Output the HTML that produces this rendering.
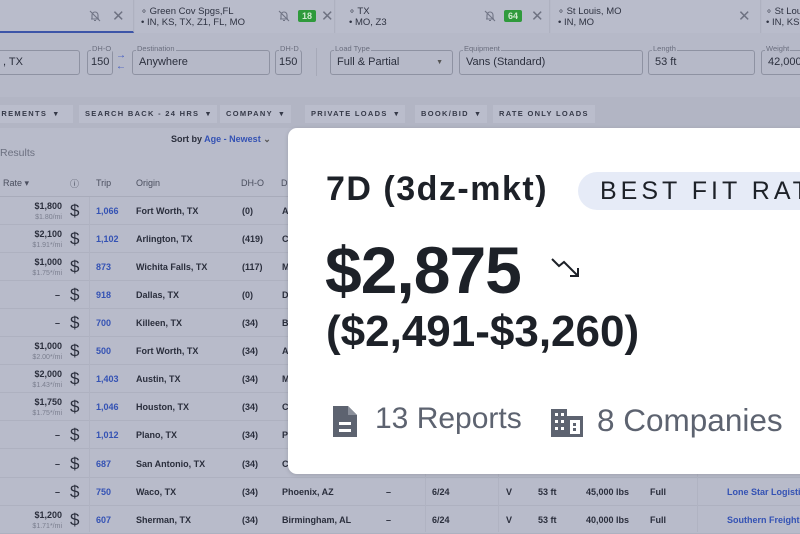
<!DOCTYPE html>
<html><head><meta charset="utf-8"><style>
*{box-sizing:border-box;margin:0;padding:0}
body{width:800px;height:532px;overflow:hidden;background:#b8bbca;font-family:"Liberation Sans",sans-serif;color:#2a2e3c;position:relative}
.a{position:absolute;white-space:nowrap}
.tabs{position:absolute;left:0;top:0;width:800px;height:33px;background:#b6b9c8}
.tab{position:absolute;top:0;height:33px;background:#b9bccb;border-right:1px solid #aeb1c0}
.tl{font-size:9.5px;line-height:11px;color:#2f3342}
.x{font-size:15px;color:#6e7282}
.badge{background:#2f9a3c;color:#cfe9cf;font-size:9px;font-weight:bold;padding:1px 4px;border-radius:2px}
.form{position:absolute;left:0;top:33px;width:800px;height:64px;background:#b6b9c8}
.fld{position:absolute;top:50px;height:25px;border:1px solid #8e92a2;border-radius:3px;font-size:11px;line-height:23px;padding-left:6px;color:#2b2f3d;white-space:nowrap}
.lab{position:absolute;top:-7px;left:3px;font-size:7.5px;line-height:10px;background:#b6b9c8;color:#6a6e7e;padding:0 1px;white-space:nowrap}
.chips{position:absolute;left:0;top:97px;width:800px;height:31px;background:#b2b5c4}
.chip{position:absolute;top:105px;height:18px;background:#babdcc;font-size:7.5px;font-weight:bold;letter-spacing:1.3px;line-height:18px;padding:0 6px;color:#353948;white-space:nowrap}
.row{position:absolute;left:0;width:800px;height:28px;border-bottom:1px solid #aeb1c0;font-size:9px;font-weight:bold}
.row span{position:absolute;top:9px;white-space:nowrap}
.b{color:#3452b4}
.card{position:absolute;left:288px;top:128px;width:530px;height:346px;background:#fff;border-radius:9px;box-shadow:0 1px 4px rgba(0,0,0,.15)}
</style></head><body>
<div class="tabs"></div>
<div class="tab" style="left:0;width:134px;border-bottom:2px solid #3d55a8"></div>
<div class="a x" style="left:112px;top:7px">✕</div>
<svg class="a" style="left:89px;top:10px" width="12" height="12" viewBox="0 0 12 12"><path d="M3 9 V5 a3 3 0 0 1 6 0 V9 H2 H10 M5 10.5 H7 M1 1 L11 11" fill="none" stroke="#707485" stroke-width="1.1"/></svg>
<div class="tab" style="left:135px;width:200px"></div>
<div class="a tl" style="left:141px;top:6px">∘ Green Cov Spgs,FL<br>• IN, KS, TX, Z1, FL, MO</div>
<svg class="a" style="left:278px;top:10px" width="12" height="12" viewBox="0 0 12 12"><path d="M3 9 V5 a3 3 0 0 1 6 0 V9 H2 H10 M5 10.5 H7 M1 1 L11 11" fill="none" stroke="#707485" stroke-width="1.1"/></svg>
<div class="a badge" style="left:298px;top:10px">18</div>
<div class="a x" style="left:321px;top:7px">✕</div>
<div class="tab" style="left:336px;width:214px"></div>
<div class="a tl" style="left:349px;top:6px">∘ TX<br>• MO, Z3</div>
<svg class="a" style="left:484px;top:10px" width="12" height="12" viewBox="0 0 12 12"><path d="M3 9 V5 a3 3 0 0 1 6 0 V9 H2 H10 M5 10.5 H7 M1 1 L11 11" fill="none" stroke="#707485" stroke-width="1.1"/></svg>
<div class="a badge" style="left:504px;top:10px">64</div>
<div class="a x" style="left:531px;top:7px">✕</div>
<div class="tab" style="left:551px;width:210px"></div>
<div class="a tl" style="left:558px;top:6px">∘ St Louis, MO<br>• IN, MO</div>
<div class="a x" style="left:738px;top:7px">✕</div>
<div class="tab" style="left:762px;width:40px"></div>
<div class="a tl" style="left:766px;top:6px">∘ St Lou<br>• IN, KS.</div>

<div class="form"></div>
<div class="fld" style="left:-4px;width:84px">, TX</div>
<div class="fld" style="left:87px;width:26px;padding-left:3px"><span class="lab">DH-O</span>150</div>
<div class="a" style="left:116px;top:50px;font-size:10px;color:#3a55c0;line-height:11px;font-weight:bold">→<br>←</div>
<div class="fld" style="left:132px;width:138px"><span class="lab">Destination</span>Anywhere</div>
<div class="fld" style="left:275px;width:27px;padding-left:3px"><span class="lab">DH-D</span>150</div>
<div class="a" style="left:316px;top:48px;width:1px;height:28px;background:#a6a9b8"></div>
<div class="fld" style="left:330px;width:123px"><span class="lab">Load Type</span>Full &amp; Partial<span style="position:absolute;right:9px;font-size:7px;color:#555">▼</span></div>
<div class="fld" style="left:459px;width:184px"><span class="lab">Equipment</span>Vans (Standard)</div>
<div class="fld" style="left:648px;width:107px"><span class="lab">Length</span>53 ft</div>
<div class="fld" style="left:761px;width:50px"><span class="lab">Weight</span>42,000</div>

<div class="chips"></div>
<div class="chip" style="left:-8px;width:81px">IREMENTS &nbsp;▾</div>
<div class="chip" style="left:79px">SEARCH BACK - 24 HRS &nbsp;▾</div>
<div class="chip" style="left:220px">COMPANY &nbsp;▾</div>
<div class="chip" style="left:305px">PRIVATE LOADS &nbsp;▾</div>
<div class="chip" style="left:415px">BOOK/BID &nbsp;▾</div>
<div class="chip" style="left:493px">RATE ONLY LOADS</div>

<div class="a" style="left:171px;top:134px;font-size:9px;font-weight:bold">Sort by <span class="b">Age - Newest</span> <span style="color:#555">⌄</span></div>
<div class="a" style="left:0;top:147px;font-size:10.5px;color:#6c7080">Results</div>
<div class="a" style="left:0;top:175px;width:800px;height:20px;font-size:9px;color:#4a4e5e">
<span class="a" style="left:3px;top:3px">Rate ▾</span><span class="a" style="left:70px;top:2px">ⓘ</span><span class="a" style="left:96px;top:3px">Trip</span><span class="a" style="left:136px;top:3px">Origin</span><span class="a" style="left:241px;top:3px">DH-O</span><span class="a" style="left:281px;top:3px">D</span></div>
<div class="a" style="left:0;top:196px;width:800px;height:1px;background:#a8abba"></div>

<div class="row" style="top:197px"><span style="right:738px;text-align:right;top:4px">$1,800<br><i style="font-weight:normal;font-style:normal;font-size:7px;color:#7a7e8e">$1.80/mi</i></span><span style="left:70px;top:4px;font-size:17px;font-weight:normal">$</span><span class="b" style="left:96px">1,066</span><span style="left:136px">Fort Worth, TX</span><span style="left:242px">(0)</span><span style="left:282px">A</span></div>
<div class="row" style="top:225px"><span style="right:738px;text-align:right;top:4px">$2,100<br><i style="font-weight:normal;font-style:normal;font-size:7px;color:#7a7e8e">$1.91*/mi</i></span><span style="left:70px;top:4px;font-size:17px;font-weight:normal">$</span><span class="b" style="left:96px">1,102</span><span style="left:136px">Arlington, TX</span><span style="left:242px">(419)</span><span style="left:282px">C</span></div>
<div class="row" style="top:253px"><span style="right:738px;text-align:right;top:4px">$1,000<br><i style="font-weight:normal;font-style:normal;font-size:7px;color:#7a7e8e">$1.75*/mi</i></span><span style="left:70px;top:4px;font-size:17px;font-weight:normal">$</span><span class="b" style="left:96px">873</span><span style="left:136px">Wichita Falls, TX</span><span style="left:242px">(117)</span><span style="left:282px">M</span></div>
<div class="row" style="top:281px"><span style="left:55px">–</span><span style="left:70px;top:4px;font-size:17px;font-weight:normal">$</span><span class="b" style="left:96px">918</span><span style="left:136px">Dallas, TX</span><span style="left:242px">(0)</span><span style="left:282px">D</span></div>
<div class="row" style="top:309px"><span style="left:55px">–</span><span style="left:70px;top:4px;font-size:17px;font-weight:normal">$</span><span class="b" style="left:96px">700</span><span style="left:136px">Killeen, TX</span><span style="left:242px">(34)</span><span style="left:282px">B</span></div>
<div class="row" style="top:337px"><span style="right:738px;text-align:right;top:4px">$1,000<br><i style="font-weight:normal;font-style:normal;font-size:7px;color:#7a7e8e">$2.00*/mi</i></span><span style="left:70px;top:4px;font-size:17px;font-weight:normal">$</span><span class="b" style="left:96px">500</span><span style="left:136px">Fort Worth, TX</span><span style="left:242px">(34)</span><span style="left:282px">A</span></div>
<div class="row" style="top:365px"><span style="right:738px;text-align:right;top:4px">$2,000<br><i style="font-weight:normal;font-style:normal;font-size:7px;color:#7a7e8e">$1.43*/mi</i></span><span style="left:70px;top:4px;font-size:17px;font-weight:normal">$</span><span class="b" style="left:96px">1,403</span><span style="left:136px">Austin, TX</span><span style="left:242px">(34)</span><span style="left:282px">M</span></div>
<div class="row" style="top:393px"><span style="right:738px;text-align:right;top:4px">$1,750<br><i style="font-weight:normal;font-style:normal;font-size:7px;color:#7a7e8e">$1.75*/mi</i></span><span style="left:70px;top:4px;font-size:17px;font-weight:normal">$</span><span class="b" style="left:96px">1,046</span><span style="left:136px">Houston, TX</span><span style="left:242px">(34)</span><span style="left:282px">C</span></div>
<div class="row" style="top:421px"><span style="left:55px">–</span><span style="left:70px;top:4px;font-size:17px;font-weight:normal">$</span><span class="b" style="left:96px">1,012</span><span style="left:136px">Plano, TX</span><span style="left:242px">(34)</span><span style="left:282px">P</span></div>
<div class="row" style="top:450px"><span style="left:55px">–</span><span style="left:70px;top:4px;font-size:17px;font-weight:normal">$</span><span class="b" style="left:96px">687</span><span style="left:136px">San Antonio, TX</span><span style="left:242px">(34)</span><span style="left:282px">C</span></div>
<div class="row" style="top:478px"><span style="left:55px">–</span><span style="left:70px;top:4px;font-size:17px;font-weight:normal">$</span><span class="b" style="left:96px">750</span><span style="left:136px">Waco, TX</span><span style="left:242px">(34)</span><span style="left:282px">Phoenix, AZ</span><span style="left:386px">–</span><span style="left:432px">6/24</span><span style="left:506px">V</span><span style="left:538px">53 ft</span><span style="left:586px">45,000 lbs</span><span style="left:650px">Full</span><span class="b" style="left:727px">Lone Star Logistics</span></div>
<div class="row" style="top:506px"><span style="right:738px;text-align:right;top:4px">$1,200<br><i style="font-weight:normal;font-style:normal;font-size:7px;color:#7a7e8e">$1.71*/mi</i></span><span style="left:70px;top:4px;font-size:17px;font-weight:normal">$</span><span class="b" style="left:96px">607</span><span style="left:136px">Sherman, TX</span><span style="left:242px">(34)</span><span style="left:282px">Birmingham, AL</span><span style="left:386px">–</span><span style="left:432px">6/24</span><span style="left:506px">V</span><span style="left:538px">53 ft</span><span style="left:586px">40,000 lbs</span><span style="left:650px">Full</span><span class="b" style="left:727px">Southern Freight</span></div>
<div class="a" style="left:89px;top:197px;width:1px;height:335px;background:#b0b3c2"></div>
<div class="a" style="left:425px;top:474px;width:1px;height:58px;background:#b0b3c2"></div>
<div class="a" style="left:498px;top:474px;width:1px;height:58px;background:#b0b3c2"></div>
<div class="a" style="left:697px;top:474px;width:1px;height:58px;background:#b0b3c2"></div>

<div class="card">
<div class="a" style="left:38px;top:42px;font-size:34px;font-weight:bold;letter-spacing:1.5px;color:#1d2128">7D (3dz-mkt)</div>
<div class="a" style="left:290px;top:44px;width:260px;height:38px;background:#e6ebf7;border-radius:19px;font-size:25px;letter-spacing:4px;line-height:38px;padding-left:22px;color:#1d2128">BEST FIT RATE</div>
<div class="a" style="left:37px;top:104px;font-size:66px;font-weight:bold;letter-spacing:-1px;color:#1d2128">$2,875</div>
<svg class="a" style="left:262px;top:128px" width="40" height="28" viewBox="0 0 40 28"><path d="M2 3 L9 10 L14 6 L27 19 M20 20 L28 20 L28 12" fill="none" stroke="#1d2128" stroke-width="2"/></svg>
<div class="a" style="left:38px;top:179px;font-size:44px;font-weight:bold;color:#1d2128">($2,491-$3,260)</div>
<svg class="a" style="left:43px;top:276px" width="28" height="35" viewBox="0 0 28 35"><path d="M2 2 H17 L26 11 V33 H2 Z" fill="#5d6370"/><path d="M17 2 V11 H26" fill="#8a8f9a"/><rect x="8" y="18" width="12" height="3" fill="#fff"/><rect x="8" y="25" width="12" height="3" fill="#fff"/></svg>
<div class="a" style="left:87px;top:274px;font-size:30px;color:#5d6370">13 Reports</div>
<svg class="a" style="left:262px;top:280px" width="34" height="30" viewBox="0 0 34 30"><path d="M1 1 H17 V8 H33 V29 H1 Z" fill="#5d6370"/><g fill="#fff"><rect x="5" y="5" width="3" height="3"/><rect x="11" y="5" width="3" height="3"/><rect x="5" y="12" width="3" height="3"/><rect x="11" y="12" width="3" height="3"/><rect x="5" y="19" width="3" height="3"/><rect x="11" y="19" width="3" height="3"/><rect x="20" y="12" width="10" height="14"/></g><rect x="23" y="15" width="3" height="3" fill="#5d6370"/><rect x="23" y="20" width="3" height="3" fill="#5d6370"/></svg>
<div class="a" style="left:309px;top:274px;font-size:31.5px;color:#5d6370">8 Companies</div>
</div>
</body></html>
